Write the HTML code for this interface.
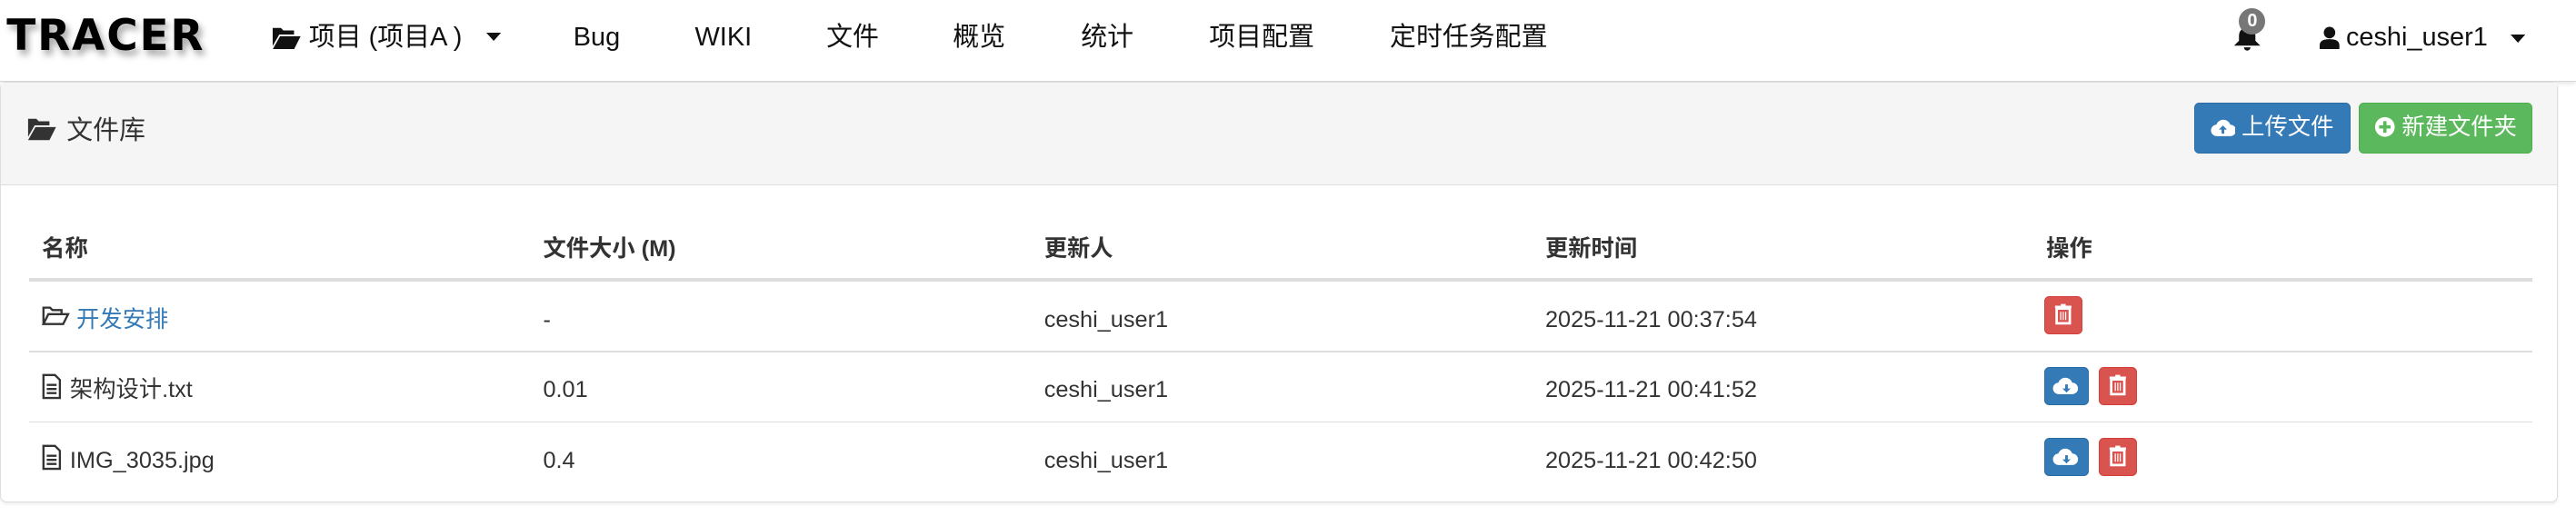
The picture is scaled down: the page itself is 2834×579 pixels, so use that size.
<!DOCTYPE html>
<html><head><meta charset="utf-8"><style>
html{zoom:1.80740}
body{margin:0;width:1568px;height:320px;background:#fff;font-family:"Liberation Sans","Noto Sans CJK SC",sans-serif;font-size:14px;line-height:20px;color:#333;overflow:hidden;position:relative}
.nav{position:absolute;left:0;top:0;width:1568px;height:49px;background:#fff;border-bottom:1px solid #d8d8d8;box-shadow:0 1px 3px rgba(0,0,0,.12)}
.logo{position:absolute;left:4px;top:6px;font-size:26px;line-height:32px;font-weight:bold;letter-spacing:1px;color:#000;text-shadow:2px 3px 4px rgba(0,0,0,.35);font-family:"DejaVu Sans","Liberation Sans",sans-serif}
.ni{position:absolute;top:13px;font-size:16px;color:#111}
.panel{position:absolute;left:0;top:50px;width:1556px;height:255px;border:1px solid #ddd;border-radius:4px;box-shadow:0 1px 2px rgba(0,0,0,.08)}
.ph{height:62px;background:#f5f5f5;border-bottom:1px solid #ddd;position:relative}
.btn{position:absolute;top:12px;height:31px;border-radius:3px;color:#fff;font-size:14px;line-height:29px;text-align:center;box-sizing:border-box}
.th,.td{position:absolute;font-size:14px}
.th{font-weight:bold}
.line{position:absolute;left:17px;width:1524px;background:#ddd}
.sb{position:absolute;width:24px;height:24px;border-radius:3px}
</style></head><body>
<div class="nav">
<div class="logo">TRACER</div>
<svg style="position:absolute;left:166px;top:16px" width="17" height="14" viewBox="0 0 17 14"><path d="M0 1h5l1.5 1.5H13v2.5H4L0 12z M4.5 6H17l-4 8H0z" fill="#111"/></svg>
<div class="ni" style="left:188px">项目 (项目A )</div>
<svg style="position:absolute;left:296px;top:20px" width="9" height="6"><path d="M0 0h9L4.5 5z" fill="#111"/></svg>
<div class="ni" style="left:349px">Bug</div>
<div class="ni" style="left:423px">WIKI</div>
<div class="ni" style="left:503px">文件</div>
<div class="ni" style="left:580px">概览</div>
<div class="ni" style="left:658px">统计</div>
<div class="ni" style="left:736px">项目配置</div>
<div class="ni" style="left:846px">定时任务配置</div>
<svg style="position:absolute;left:1359px;top:14px" width="18" height="19" viewBox="0 0 18 19"><path d="M9 3c-3 0-5 2-5 5v3l-3 3h16l-3-3V8c0-3-2-5-5-5z M7 15h4a2 2 0 0 1-4 0z" fill="#111"/></svg>
<div style="position:absolute;left:1363px;top:5px;width:16px;height:16px;border-radius:8px;background:#777;color:#fff;font-size:11px;font-weight:bold;text-align:center;line-height:16px">0</div>
<svg style="position:absolute;left:1412px;top:16px" width="12" height="14" viewBox="0 0 12 14"><circle cx="6" cy="3.8" r="3.5" fill="#111"/><path d="M0 14v-2.5C0 9 2 7.8 6 7.8s6 1.2 6 3.7V14z" fill="#111"/></svg>
<div class="ni" style="left:1428px;font-size:16px">ceshi_user1</div>
<svg style="position:absolute;left:1528px;top:21px" width="9" height="6"><path d="M0 0h9L4.5 5z" fill="#111"/></svg>
</div>
<div class="panel">
<div class="ph">
<svg style="position:absolute;left:16px;top:21px" width="18" height="14" viewBox="0 0 17 14"><path d="M0 1h5l1.5 1.5H13v2.5H4L0 12z M4.5 6H17l-4 8H0z" fill="#333"/></svg>
<div style="position:absolute;left:40px;top:19px;font-size:16px;color:#333">文件库</div>
<div class="btn" style="left:1335px;width:95px;background:#337ab7;border:1px solid #2e6da4"><svg style="vertical-align:-2px" width="15" height="12" viewBox="0 0 15 12"><path d="M4 11a3.5 3.5 0 0 1-.5-7A4.5 4.5 0 0 1 12 4a3.5 3.5 0 0 1 0 7z" fill="#fff"/><path d="M7.5 4.5L5 7h1.7v2.5h1.6V7H10z" fill="#337ab7"/></svg> 上传文件</div>
<div class="btn" style="left:1435px;width:106px;background:#5cb85c;border:1px solid #4cae4c"><svg style="vertical-align:-2px" width="13" height="13" viewBox="0 0 13 13"><circle cx="6.5" cy="6.5" r="6" fill="#fff"/><path d="M5.5 3h2v2.5H10v2H7.5V10h-2V7.5H3v-2h2.5z" fill="#5cb85c"/></svg> 新建文件夹</div>
</div>
<div class="th" style="left:25px;top:91px">名称</div>
<div class="th" style="left:330px;top:91px">文件大小 (M)</div>
<div class="th" style="left:635px;top:91px">更新人</div>
<div class="th" style="left:940px;top:91px">更新时间</div>
<div class="th" style="left:1245px;top:91px">操作</div>
<div class="line" style="top:119px;height:2px"></div>
<div class="line" style="top:163px;height:1px"></div>
<div class="line" style="top:206px;height:1px"></div>

<svg style="position:absolute;left:25px;top:135px" width="17" height="14" viewBox="0 0 17 14"><path d="M1 12V2h4l1.5 1.5H12v2.5 M1 12l3-6h12l-3 6z" fill="none" stroke="#333" stroke-width="1.3"/></svg>
<div class="td" style="left:46px;top:134px;color:#337ab7">开发安排</div>
<div class="td" style="left:330px;top:134px">-</div>
<div class="td" style="left:635px;top:134px">ceshi_user1</div>
<div class="td" style="left:940px;top:134px">2025-11-21 00:37:54</div>

<svg style="position:absolute;left:25px;top:177px" width="12" height="16" viewBox="0 0 12 16"><path d="M1 1h7l3 3v11H1z M3 7h6M3 9.5h6M3 12h6" fill="none" stroke="#333" stroke-width="1.3"/></svg>
<div class="td" style="left:42px;top:177px">架构设计.txt</div>
<div class="td" style="left:330px;top:177px">0.01</div>
<div class="td" style="left:635px;top:177px">ceshi_user1</div>
<div class="td" style="left:940px;top:177px">2025-11-21 00:41:52</div>

<svg style="position:absolute;left:25px;top:220px" width="12" height="16" viewBox="0 0 12 16"><path d="M1 1h7l3 3v11H1z M3 7h6M3 9.5h6M3 12h6" fill="none" stroke="#333" stroke-width="1.3"/></svg>
<div class="td" style="left:42px;top:220px">IMG_3035.jpg</div>
<div class="td" style="left:330px;top:220px">0.4</div>
<div class="td" style="left:635px;top:220px">ceshi_user1</div>
<div class="td" style="left:940px;top:220px">2025-11-21 00:42:50</div>

<div class="sb" style="left:1244px;top:130px;background:#d9534f;border:1px solid #d43f3a;width:22px;height:22px"><svg width="22" height="22" viewBox="0 0 22 22"><path d="M7 7h8v9H7z M6 6h10M9.5 5h3" fill="none" stroke="#fff" stroke-width="1.5"/><path d="M9.5 9v5M11 9v5M12.5 9v5" stroke="#fff" stroke-width=".7"/></svg></div>

<div class="sb" style="left:1244px;top:173px;background:#337ab7;border:1px solid #2e6da4;width:26px;height:22px"><svg width="26" height="22" viewBox="0 0 26 22"><path d="M8.5 16a3.5 3.5 0 0 1-.5-7A4.5 4.5 0 0 1 16.5 9a3.5 3.5 0 0 1 0 7z" fill="#fff"/><path d="M13 15l-2.5-2.5h1.7V10h1.6v2.5h1.7z" fill="#337ab7"/></svg></div>
<div class="sb" style="left:1277px;top:173px;background:#d9534f;border:1px solid #d43f3a;width:22px;height:22px"><svg width="22" height="22" viewBox="0 0 22 22"><path d="M7 7h8v9H7z M6 6h10M9.5 5h3" fill="none" stroke="#fff" stroke-width="1.5"/><path d="M9.5 9v5M11 9v5M12.5 9v5" stroke="#fff" stroke-width=".7"/></svg></div>

<div class="sb" style="left:1244px;top:216px;background:#337ab7;border:1px solid #2e6da4;width:26px;height:22px"><svg width="26" height="22" viewBox="0 0 26 22"><path d="M8.5 16a3.5 3.5 0 0 1-.5-7A4.5 4.5 0 0 1 16.5 9a3.5 3.5 0 0 1 0 7z" fill="#fff"/><path d="M13 15l-2.5-2.5h1.7V10h1.6v2.5h1.7z" fill="#337ab7"/></svg></div>
<div class="sb" style="left:1277px;top:216px;background:#d9534f;border:1px solid #d43f3a;width:22px;height:22px"><svg width="22" height="22" viewBox="0 0 22 22"><path d="M7 7h8v9H7z M6 6h10M9.5 5h3" fill="none" stroke="#fff" stroke-width="1.5"/><path d="M9.5 9v5M11 9v5M12.5 9v5" stroke="#fff" stroke-width=".7"/></svg></div>
</div>
</body></html>
